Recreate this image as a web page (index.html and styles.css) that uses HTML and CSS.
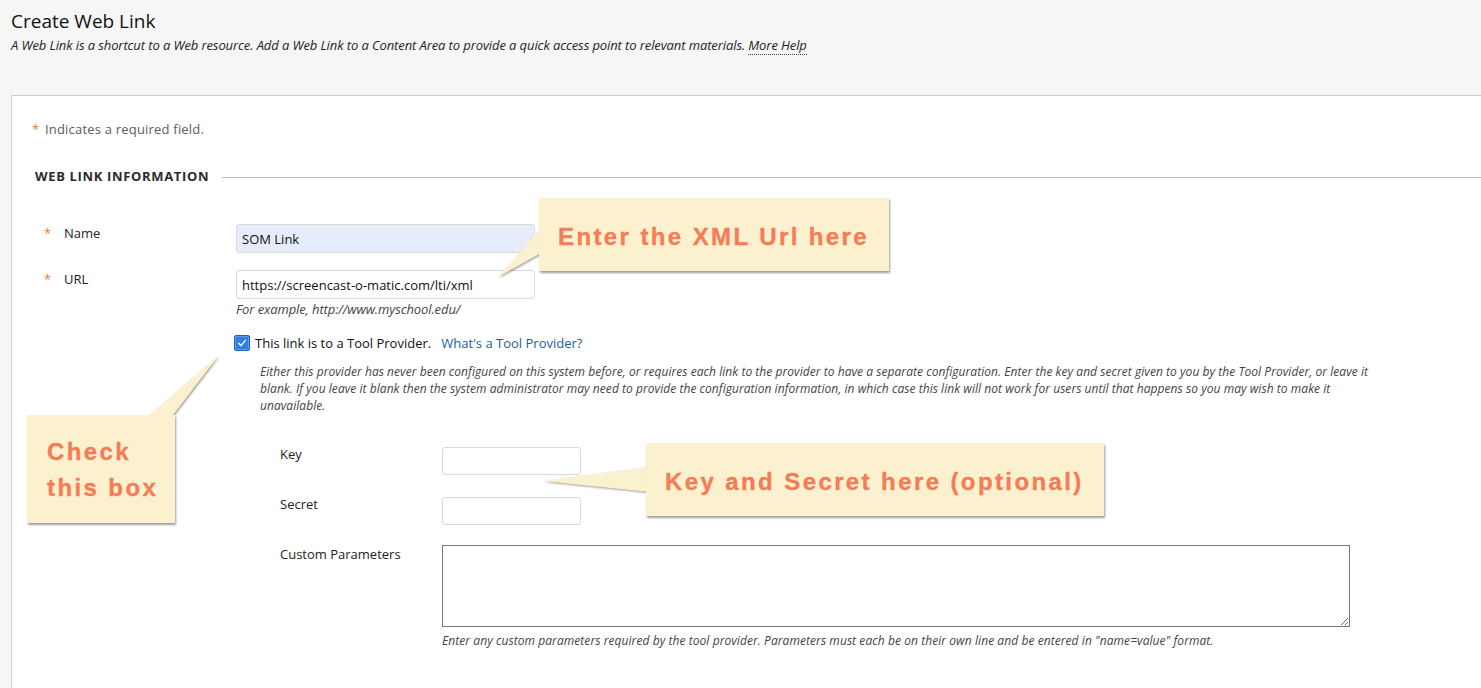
FILE: index.html
```html
<!DOCTYPE html>
<html lang="en">
<head>
<meta charset="utf-8">
<title>Create Web Link</title>
<link rel="stylesheet" href="styles.css">
</head>
<body>
<div class="page">
  <header class="header">
    <h1 class="title">Create Web Link</h1>
    <p class="desc">A Web Link is a shortcut to a Web resource. Add a Web Link to a Content Area to provide a quick access point to relevant materials. <a class="more-help" href="#">More Help</a></p>
  </header>

  <main class="panel">
    <p class="req-note"><span class="star">*</span> Indicates a required field.</p>

    <section class="section">
      <div class="section-head">
        <h2 class="section-title">WEB LINK INFORMATION</h2>
        <div class="section-line"></div>
      </div>

      <div class="row">
        <div class="label"><span class="star">*</span><span class="label-text">Name</span></div>
        <input class="field field-wide autofill" type="text" value="SOM Link">
      </div>

      <div class="row row-url">
        <div class="label"><span class="star">*</span><span class="label-text">URL</span></div>
        <div class="field-col">
          <input class="field field-wide" type="text" value="https://screencast-o-matic.com/lti/xml">
          <p class="hint">For example, http://www.myschool.edu/</p>
        </div>
      </div>

      <div class="tool-block">
        <div class="check-row">
          <span class="checkbox">
            <svg viewBox="0 0 16 16" width="16" height="16"><path d="M4.2 8.4 L6.9 11 L11.8 5" fill="none" stroke="#fff" stroke-width="1.6" stroke-linecap="round" stroke-linejoin="round"/></svg>
          </span>
          <span class="check-text">This link is to a Tool Provider.</span>
          <a class="tool-link" href="#">What's a Tool Provider?</a>
        </div>
        <p class="tool-para">Either this provider has never been configured on this system before, or requires each link to the provider to have a separate configuration. Enter the key and secret given to you by the Tool Provider, or leave it blank. If you leave it blank then the system administrator may need to provide the configuration information, in which case this link will not work for users until that happens so you may wish to make it unavailable.</p>

        <div class="sub-form">
          <div class="sub-row">
            <div class="sub-label">Key</div>
            <input class="field field-small" type="text">
          </div>
          <div class="sub-row sub-row-secret">
            <div class="sub-label">Secret</div>
            <input class="field field-small" type="password">
          </div>
          <div class="sub-row sub-row-custom">
            <div class="sub-label sub-label-custom">Custom Parameters</div>
            <div class="field-col">
              <textarea class="params"></textarea>
              <p class="hint hint-params">Enter any custom parameters required by the tool provider. Parameters must each be on their own line and be entered in "name=value" format.</p>
            </div>
          </div>
        </div>
      </div>
    </section>
  </main>

  <!-- annotation callouts -->
  <svg class="pointer pointer-1" width="60" height="70" viewBox="0 0 60 70"><polygon points="53,11 8,62 53,37"/></svg>
  <div class="callout callout-1">Enter the XML Url here</div>

  <svg class="pointer pointer-2" width="95" height="80" viewBox="0 0 95 80"><polygon points="10,74 84,10 35,74"/></svg>
  <div class="callout callout-2">Check<br>this box</div>

  <svg class="pointer pointer-3" width="120" height="45" viewBox="0 0 120 45"><polygon points="115,12 8,26 115,37"/></svg>
  <div class="callout callout-3">Key and Secret here (optional)</div>
</div>
</body>
</html>
```

FILE: styles.css
```css
html, body {
  margin: 0;
  padding: 0;
}
body {
  background: #f6f6f6;
  font-family: "Open Sans", "Liberation Sans", sans-serif;
  color: #222;
  overflow: hidden;
}
.page {
  position: relative;
  min-height: 688px;
}

/* header */
.header {
  padding: 9px 11px 0;
}
.title {
  margin: 0;
  font-size: 19px;
  font-weight: 400;
  line-height: 24px;
  color: #111;
}
.desc {
  margin: 4px 0 0;
  font-size: 13px;
  font-style: italic;
  line-height: 17px;
  color: #1e1e1e;
  letter-spacing: -0.1px;
}
.more-help {
  color: #1e1e1e;
  text-decoration: none;
  border-bottom: 1px dotted #444;
}

/* panel */
.panel {
  margin: 41px 0 0 11px;
  background: #fff;
  border-top: 1px solid #cfcfcf;
  border-left: 1px solid #cfcfcf;
  min-height: 600px;
  padding-top: 24px;
}
.req-note {
  margin: 0 0 0 20px;
  font-size: 13px;
  line-height: 18px;
  color: #5c5c5c;
  letter-spacing: 0.2px;
}
.req-note .star {
  margin-right: 2px;
}
.star {
  color: #ef7a2a;
  font-size: 13px;
}

.section {
  padding-left: 23px;
}
.section-head {
  display: flex;
  align-items: center;
  margin-top: 29px;
  height: 18px;
}
.section-title {
  margin: 0;
  font-size: 13px;
  font-weight: 700;
  line-height: 18px;
  color: #2b2b2b;
  letter-spacing: 0.65px;
}
.section-line {
  flex: 1;
  margin-left: 13px;
  border-top: 1px solid #bdbdbd;
  margin-top: 2px;
}

/* rows */
.row {
  display: flex;
  align-items: flex-start;
  margin-top: 39px;
}
.row-url {
  margin-top: 17px;
}
.label {
  width: 201px;
  padding-left: 9px;
  box-sizing: border-box;
  display: flex;
  font-size: 13px;
  line-height: 18px;
  color: #222;
}
.label .star {
  width: 20px;
}
.field-col {
  display: flex;
  flex-direction: column;
}
.field {
  box-sizing: border-box;
  font-family: "Open Sans", "Liberation Sans", sans-serif;
  font-size: 13px;
  color: #111;
  border: 1px solid #d9d9d9;
  border-radius: 3px;
  background: #fff;
  padding: 0 5px;
  outline: none;
  margin: 0;
}
.field-wide {
  width: 299px;
  height: 29px;
}
.autofill {
  background: #e5ecfb;
}
.hint {
  margin: 2px 0 0;
  font-size: 13px;
  font-style: italic;
  line-height: 17px;
  color: #444;
  letter-spacing: -0.1px;
}

/* tool provider */
.tool-block {
  padding-left: 199px;
}
.check-row {
  display: flex;
  align-items: center;
  margin-top: 16px;
  height: 18px;
  font-size: 13px;
}
.checkbox {
  width: 16px;
  height: 16px;
  box-sizing: border-box;
  background: #2f7ee3;
  border: 1px solid #1d62c0;
  border-radius: 2px;
  display: flex;
  align-items: center;
  justify-content: center;
  box-shadow: inset 0 0 0 1px #5b9bf0;
}
.checkbox svg {
  display: block;
}
.check-text {
  margin-left: 5px;
  color: #111;
}
.tool-link {
  margin-left: 10px;
  color: #21609e;
  text-decoration: none;
}
.tool-para {
  margin: 11px 0 0 26px;
  width: 1125px;
  font-size: 12px;
  font-style: italic;
  line-height: 17px;
  color: #444;
  letter-spacing: 0.05px;
}

.sub-form {
  padding-left: 46px;
  margin-top: 31px;
}
.sub-row {
  display: flex;
  align-items: flex-start;
}
.sub-row-secret {
  margin-top: 20px;
}
.sub-row-custom {
  margin-top: 20px;
}
.sub-label {
  width: 162px;
  font-size: 13px;
  line-height: 18px;
  color: #222;
}
.field-small {
  width: 139px;
  height: 28px;
  margin-top: 2px;
}
.params {
  display: block;
  box-sizing: border-box;
  width: 908px;
  height: 82px;
  margin: 0;
  border: 1px solid #767676;
  border-radius: 0;
  background: #fff;
  resize: both;
  font-family: "Open Sans", "Liberation Sans", sans-serif;
}
.hint-params {
  margin-top: 5px;
  font-size: 12px;
  letter-spacing: 0.07px;
}

/* callouts */
.callout {
  position: absolute;
  box-sizing: border-box;
  background: #fcf1cf;
  box-shadow: 1px 2px 2px rgba(0, 0, 0, 0.38);
  color: #f47c57;
  font-family: "Liberation Sans", Arial, sans-serif;
  font-weight: 700;
  font-size: 24px;
  letter-spacing: 2.4px;
  -webkit-text-stroke: 0.35px #f47c57;
  white-space: nowrap;
  z-index: 2;
}
.pointer {
  position: absolute;
  z-index: 1;
  overflow: visible;
  filter: drop-shadow(1px 1.5px 1.2px rgba(0, 0, 0, 0.4));
}
.pointer polygon {
  fill: #fcf1cf;
}
.callout-1 {
  left: 539px;
  top: 198px;
  width: 350px;
  height: 73px;
  padding: 24px 0 0 19px;
  line-height: 30px;
}
.pointer-1 {
  left: 490px;
  top: 215px;
}
.callout-2 {
  left: 27px;
  top: 415px;
  width: 148px;
  height: 108px;
  padding: 19px 0 0 20px;
  line-height: 36px;
}
.pointer-2 {
  left: 135px;
  top: 345px;
}
.callout-3 {
  left: 646px;
  top: 443px;
  width: 458px;
  height: 73px;
  padding: 24px 0 0 19px;
  line-height: 30px;
}
.pointer-3 {
  left: 535px;
  top: 455px;
}
```
